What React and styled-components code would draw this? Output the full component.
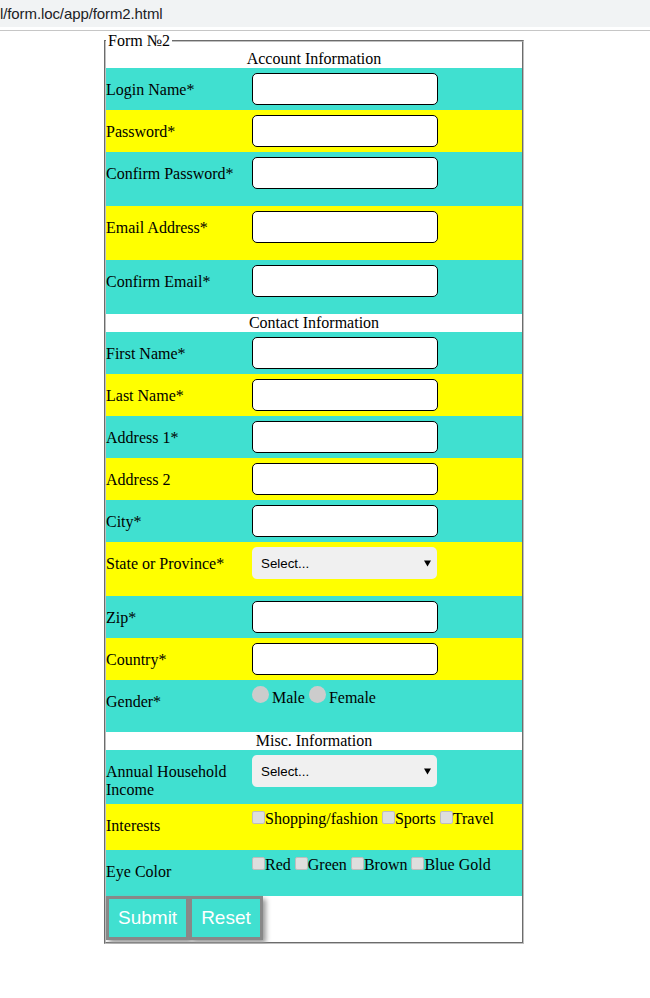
import styled, { createGlobalStyle } from 'styled-components'

const GlobalStyle = createGlobalStyle`
  body {
    margin: 0;
    background: #fff;
    font-family: "Liberation Serif", "Times New Roman", serif;
    font-size: 16px;
    color: #000;
  }
`

const TURQ = '#40e0d0'
const YELLOW = '#ffff00'

const sections = [
  {
    title: 'Account Information',
    rows: [
      { label: 'Login Name*', kind: 'input', bg: TURQ, h: 42 },
      { label: 'Password*', kind: 'input', bg: YELLOW, h: 42 },
      { label: 'Confirm Password*', kind: 'input', bg: TURQ, h: 54 },
      { label: 'Email Address*', kind: 'input', bg: YELLOW, h: 54 },
      { label: 'Confirm Email*', kind: 'input', bg: TURQ, h: 54 },
    ],
  },
  {
    title: 'Contact Information',
    rows: [
      { label: 'First Name*', kind: 'input', bg: TURQ, h: 42 },
      { label: 'Last Name*', kind: 'input', bg: YELLOW, h: 42 },
      { label: 'Address 1*', kind: 'input', bg: TURQ, h: 42 },
      { label: 'Address 2', kind: 'input', bg: YELLOW, h: 42 },
      { label: 'City*', kind: 'input', bg: TURQ, h: 42 },
      { label: 'State or Province*', kind: 'select', bg: YELLOW, h: 54 },
      { label: 'Zip*', kind: 'input', bg: TURQ, h: 42 },
      { label: 'Country*', kind: 'input', bg: YELLOW, h: 42 },
      { label: 'Gender*', kind: 'radio', bg: TURQ, h: 52, options: ['Male', 'Female'] },
    ],
  },
  {
    title: 'Misc. Information',
    rows: [
      { label: 'Annual Household Income', kind: 'select', bg: TURQ, h: 54 },
      { label: 'Interests', kind: 'check', bg: YELLOW, h: 46, options: ['Shopping/fashion', 'Sports', 'Travel'] },
      { label: 'Eye Color', kind: 'check', bg: TURQ, h: 46, options: ['Red', 'Green', 'Brown', 'Blue Gold'] },
    ],
  },
]

const Field = ({ row }) => {
  if (row.kind === 'input') return <TextInput type="text" />
  if (row.kind === 'select')
    return (
      <SelectBox>
        <Select defaultValue="">
          <option value="">Select...</option>
        </Select>
        <Arrow viewBox="0 0 8 7">
          <polygon points="0,0 8,0 4,7" fill="#000" />
        </Arrow>
      </SelectBox>
    )
  return (
    <Choices>
      {row.options.map((opt, i) => (
        <span key={opt}>
          {i > 0 && ' '}
          {row.kind === 'radio' ? <Radio type="radio" name={row.label} /> : <Check type="checkbox" />}
          {opt}
        </span>
      ))}
    </Choices>
  )
}

const App = () => {
  return (
    <>
      <GlobalStyle />
      <Header>
        <AddressBar>l/form.loc/app/form2.html</AddressBar>
      </Header>
      <Page>
        <Fieldset>
          <Legend>Form №2</Legend>
          {sections.map((s) => (
            <div key={s.title}>
              <Heading>{s.title}</Heading>
              {s.rows.map((row) => (
                <Row key={row.label} $bg={row.bg} $h={row.h}>
                  <Label>{row.label}</Label>
                  <FieldCell>
                    <Field row={row} />
                  </FieldCell>
                </Row>
              ))}
            </div>
          ))}
          <Buttons>
            <Button type="submit">Submit</Button>
            <Button type="reset">Reset</Button>
          </Buttons>
        </Fieldset>
      </Page>
    </>
  )
}

const Header = styled.header`
  padding-bottom: 3px;
  border-bottom: 1px solid #c6c6c6;
`

const AddressBar = styled.div`
  height: 27px;
  background: #f1f3f4;
  font-family: "Liberation Sans", Arial, sans-serif;
  font-size: 15px;
  line-height: 27px;
  color: #202124;
  letter-spacing: -0.1px;
`

const Page = styled.main`
  padding: 1px 0 0 104px;
`

const Fieldset = styled.fieldset`
  width: 416px;
  margin: 0;
  padding: 0;
  border: 2px groove #c0c0c0;
`

const Legend = styled.legend`
  padding: 0 2px;
  line-height: 18px;
`

const Heading = styled.div`
  height: 18px;
  line-height: 18px;
  text-align: center;
  background: #fff;
`

const Row = styled.div`
  display: flex;
  align-items: flex-start;
  height: ${(p) => p.$h}px;
  background: ${(p) => p.$bg};
`

const Label = styled.div`
  width: 146px;
  padding-top: 13px;
  line-height: 18px;
`

const FieldCell = styled.div`
  padding-top: 5px;
`

const TextInput = styled.input`
  box-sizing: border-box;
  width: 186px;
  height: 32px;
  margin: 0;
  border: 1px solid #000;
  border-radius: 5px;
  background: #fff;
`

const SelectBox = styled.div`
  position: relative;
  width: 185px;
  height: 32px;
`

const Select = styled.select`
  appearance: none;
  width: 100%;
  height: 100%;
  margin: 0;
  padding: 0 0 0 9px;
  border: none;
  border-radius: 5px;
  background: #f0f0f0;
  font-family: "Liberation Sans", Arial, sans-serif;
  font-size: 13.33px;
  color: #000;
`

const Arrow = styled.svg`
  position: absolute;
  right: 6px;
  top: 13px;
  width: 7px;
  height: 7px;
  pointer-events: none;
`

const Choices = styled.div`
  padding-top: 1px;
  white-space: nowrap;
`

const Radio = styled.input`
  appearance: none;
  display: inline-block;
  width: 17px;
  height: 17px;
  margin: 0 3px 0 0;
  border-radius: 50%;
  background: #cccccc;
`

const Check = styled.input`
  appearance: none;
  display: inline-block;
  box-sizing: border-box;
  width: 13px;
  height: 13px;
  margin: 0;
  border: 1px solid #bdbdbd;
  border-radius: 2px;
  background: #dedede;
`

const Buttons = styled.div`
  display: flex;
  height: 46px;
  background: #fff;
`

const Button = styled.button`
  height: 44px;
  margin: 0;
  padding: 0 9px;
  border: 3px solid #888;
  background: ${TURQ};
  color: #fff;
  font-family: "Liberation Sans", Arial, sans-serif;
  font-size: 19px;
  box-shadow: 3px 3px 5px #9a9a9a;
  cursor: pointer;
`

export default App
